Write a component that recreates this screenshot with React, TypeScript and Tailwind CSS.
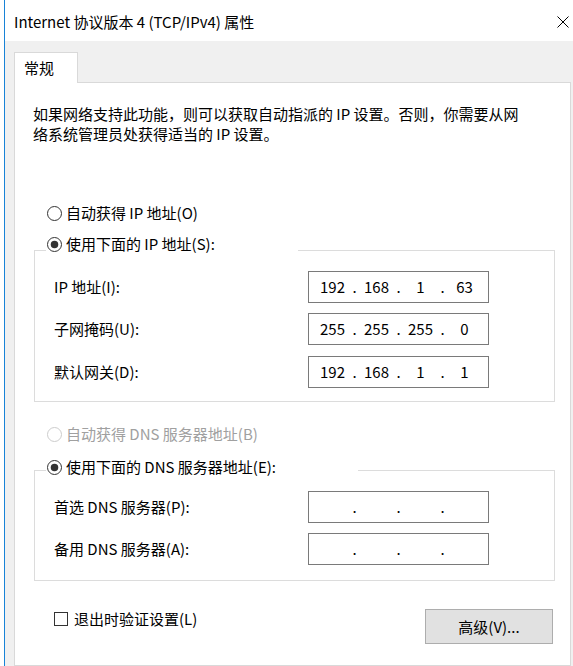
// IPv4 properties dialog (Windows 10 style)

import React from 'react';

const Radio = ({ checked, disabled }: { checked?: boolean; disabled?: boolean }) => (
  <svg width="15" height="15" viewBox="0 0 15 15" className="shrink-0">
    <circle cx="7.5" cy="7.5" r="7" fill="white" stroke={disabled ? '#cccccc' : '#333333'} strokeWidth="1" />
    {checked && <circle cx="7.5" cy="7.5" r="3.75" fill="#333333" />}
  </svg>
);

const RadioRow = ({ label, checked, disabled }: { label: string; checked?: boolean; disabled?: boolean }) => (
  <div className={`flex h-[20px] items-center gap-[4px] ${disabled ? 'text-[#a0a0a0]' : 'text-black'}`}>
    <Radio checked={checked} disabled={disabled} />
    <span className="whitespace-nowrap">{label}</span>
  </div>
);

const IpBox = ({ parts }: { parts: string[] }) => (
  <div className="flex h-[32px] w-[181px] items-center border border-[#7a7a7a] bg-white pl-[4px]">
    {parts.map((p, i) => (
      <React.Fragment key={i}>
        {i > 0 && <span className="w-[5px] text-center">.</span>}
        <span className="w-[39px] text-center">{p}</span>
      </React.Fragment>
    ))}
  </div>
);

const FieldRow = ({ label, parts, className }: { label: string; parts: string[]; className?: string }) => (
  <div className={`flex items-center ${className ?? ''}`}>
    <span className="w-[262px] whitespace-nowrap pl-[8px]">{label}</span>
    <IpBox parts={parts} />
  </div>
);

export default function App() {
  return (
    <div className="flex h-[666px] w-[573px] bg-white font-['Noto_Sans_CJK_SC',sans-serif] text-[15px] leading-[20px] text-black">
      <div className="w-[4px] bg-white" />
      <div className="w-px bg-[#1883d7]" />
      <div className="flex flex-1 flex-col">
        {/* title bar */}
        <div className="flex h-[41px] shrink-0 items-center justify-between pl-[9px] pr-[4px] pt-[3px]">
          <span className="whitespace-nowrap">Internet 协议版本 4 (TCP/IPv4) 属性</span>
          <svg width="12" height="12" viewBox="0 0 12 12">
            <path d="M0.5 0.5 L11.5 11.5 M11.5 0.5 L0.5 11.5" stroke="#000" strokeWidth="1" />
          </svg>
        </div>

        {/* body */}
        <div className="flex flex-1 flex-col bg-[#f0f0f0] pl-[9px] pr-[2px] pt-[11px]">
          <div className="relative z-10 -mb-px flex h-[31px] w-[64px] items-center border border-b-0 border-[#d9d9d9] bg-white pl-[9px]">
            常规
          </div>
          <div className="h-[584px] border border-[#d9d9d9] bg-white">
            <div className="pl-[18px] pt-[21px]">
              <div className="whitespace-nowrap">如果网络支持此功能，则可以获取自动指派的 IP 设置。否则，你需要从网</div>
              <div className="whitespace-nowrap">络系统管理员处获得适当的 IP 设置。</div>
            </div>

            <div className="mt-[59px] pl-[32px]">
              <RadioRow label="自动获得 IP 地址(O)" />
            </div>

            <fieldset className="ml-[19px] mt-[11px] w-[521px] border border-[#dcdcdc] px-[11px] pb-[13px] pt-[5px]">
              <legend className="w-[252px] pb-[12px] pl-[1px]">
                <RadioRow label="使用下面的 IP 地址(S):" checked />
              </legend>
              <FieldRow label="IP 地址(I):" parts={['192', '168', '1', '63']} />
              <FieldRow label="子网掩码(U):" parts={['255', '255', '255', '0']} className="mt-[10px]" />
              <FieldRow label="默认网关(D):" parts={['192', '168', '1', '1']} className="mt-[11px]" />
            </fieldset>

            <div className="mt-[22px] pl-[32px]">
              <RadioRow label="自动获得 DNS 服务器地址(B)" disabled />
            </div>

            <fieldset className="ml-[19px] mt-[13px] w-[521px] border border-[#dcdcdc] px-[11px] pb-[15px] pt-[8px]">
              <legend className="w-[312px] pb-[6px] pl-[1px]">
                <RadioRow label="使用下面的 DNS 服务器地址(E):" checked />
              </legend>
              <FieldRow label="首选 DNS 服务器(P):" parts={['', '', '', '']} />
              <FieldRow label="备用 DNS 服务器(A):" parts={['', '', '', '']} className="mt-[10px]" />
            </fieldset>

            <div className="mt-[28px] flex items-start justify-between pl-[39px] pr-[17px]">
              <div className="flex h-[20px] items-center gap-[6px]">
                <span className="h-[14px] w-[14px] border border-[#333333] bg-white" />
                <span className="whitespace-nowrap">退出时验证设置(L)</span>
              </div>
              <button className="flex h-[35px] w-[128px] items-center justify-center border border-[#adadad] bg-[#e1e1e1]">
                高级(V)...
              </button>
            </div>
          </div>
        </div>
      </div>
    </div>
  );
}
